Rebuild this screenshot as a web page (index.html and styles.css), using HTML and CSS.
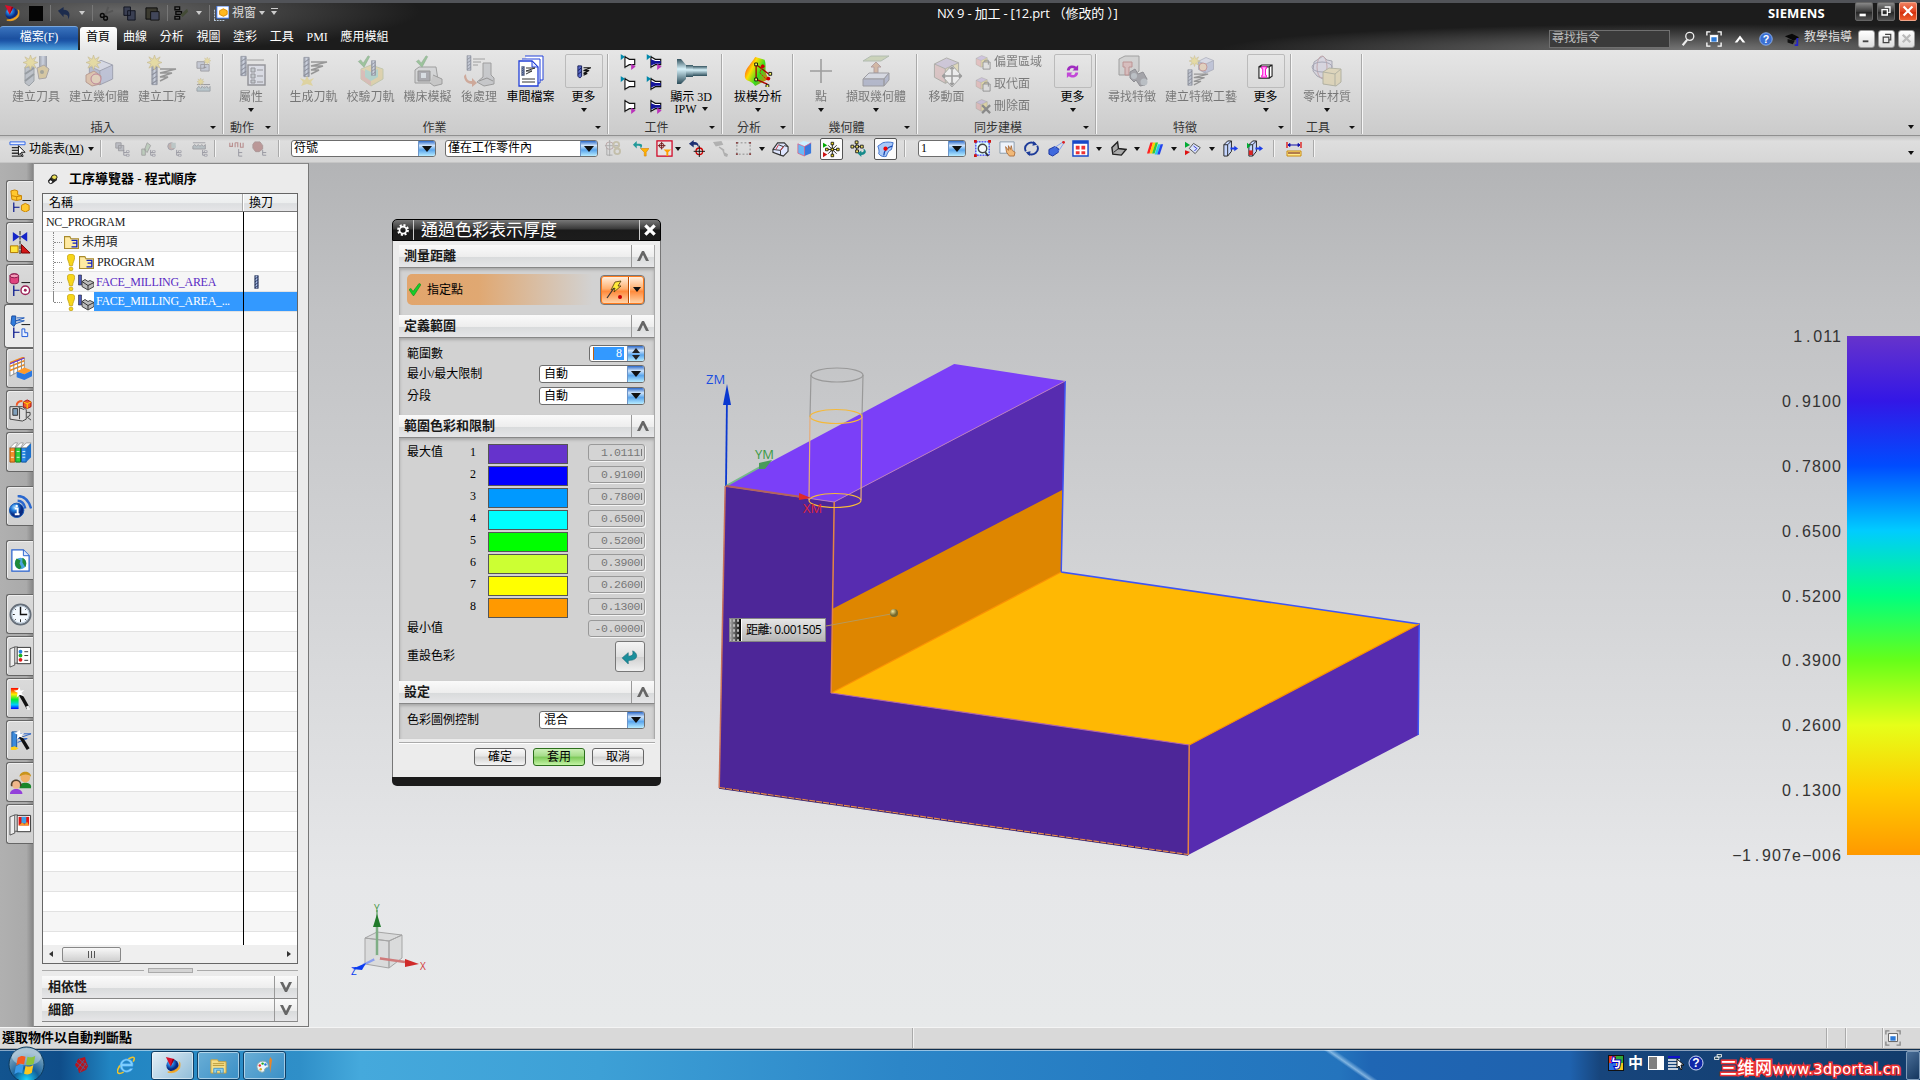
FILE: index.html
```html
<!DOCTYPE html>
<html lang="zh-Hant">
<head>
    <meta charset="UTF-8">
    <title>NX 9 - 加工</title>
    <link rel="stylesheet" href="styles.css">
</head>
<body>
    <!-- icon library -->
    <svg class="defs" width="0" height="0">
        <defs>
            <linearGradient id="steel"><stop offset="0" stop-color="#3c4a66"/><stop offset=".5" stop-color="#a9bce8"/><stop offset="1" stop-color="#2f3d63"/></linearGradient>
            <linearGradient id="pipe" x2="0" y2="1"><stop offset="0" stop-color="#33525e"/><stop offset=".4" stop-color="#d8f2fa"/><stop offset="1" stop-color="#2b4c59"/></linearGradient>
            <linearGradient id="heat" x1="0" x2="1" y1=".2" y2=".8"><stop offset="0" stop-color="#f22"/><stop offset=".3" stop-color="#fd0"/><stop offset=".6" stop-color="#3d2"/><stop offset="1" stop-color="#f60"/></linearGradient>
            <linearGradient id="rain" x2="0" y2="1"><stop offset="0" stop-color="#f00"/><stop offset=".3" stop-color="#fe0"/><stop offset=".55" stop-color="#0e3"/><stop offset=".8" stop-color="#0cf"/><stop offset="1" stop-color="#00f"/></linearGradient>
            <radialGradient id="ball" cx=".35" cy=".3"><stop offset="0" stop-color="#9fd8ff"/><stop offset=".5" stop-color="#1e78d8"/><stop offset="1" stop-color="#0a2a80"/></radialGradient>
            <radialGradient id="orb" cx=".5" cy=".95" r=".8"><stop offset="0" stop-color="#19d8ff"/><stop offset=".45" stop-color="#12609c"/><stop offset="1" stop-color="#7fa6bf"/></radialGradient>
            <radialGradient id="bead" cx=".35" cy=".3"><stop offset="0" stop-color="#f0e6a0"/><stop offset="1" stop-color="#75682a"/></radialGradient>
        </defs>
        <symbol id="star" viewBox="0 0 16 16"><path d="M8 0l1.600 4.600L14 2l-2.400 4.500L16 8l-4.500 1.600L14 14l-4.600-2.500L8 16l-1.500-4.500L2 14l2.400-4.500L0 8l4.600-1.600L2 2l4.500 2.500z" fill="#f5d21c" stroke="#a98300" stroke-width=".7"/></symbol>
        <symbol id="mill" viewBox="0 0 8 24"><path d="M1 1h6v22H1z" fill="url(#steel)" stroke="#26345c"/><path d="M1 7l6-4M1 12l6-4M1 17l6-4M1 22l6-4" stroke="#1b2750" stroke-width="1.300"/></symbol>
        <symbol id="lines" viewBox="0 0 18 14"><path d="M1 1h16L1 5h12L1 9h8L1 13" fill="none" stroke="#333" stroke-width="1.400"/></symbol>
        <symbol id="cube" viewBox="0 0 24 24"><path d="M2 7l9 4v12l-9-5z" fill="#7789c9"/><path d="M2 7l10-5 10 4-11 5z" fill="#c4cdf2"/><path d="M11 11l11-5v12l-11 5z" fill="#8c9cdb"/><path d="M2 7l10-5 10 4v12l-11 5-9-5zm0 0l9 4 11-5M11 11v12" fill="none" stroke="#3c4777" stroke-width=".8"/></symbol>
        <symbol id="goldcube" viewBox="0 0 24 24"><path d="M2 7l9 4v12l-9-5z" fill="#e39a9a"/><path d="M2 7l10-5 10 4-11 5z" fill="#b6a0d8"/><path d="M11 11l11-5v12l-11 5z" fill="#e5cf6c"/><path d="M2 7l10-5 10 4v12l-11 5-9-5zm0 0l9 4 11-5M11 11v12" fill="none" stroke="#665" stroke-width=".8"/></symbol>
        <symbol id="check" viewBox="0 0 16 16"><path d="M1 8l3-2 3 4 6-9 2 1-7 13z" fill="#20a51f" stroke="#0b6a18" stroke-width=".7"/></symbol>
        <symbol id="tool-new" viewBox="0 0 32 32"><path d="M19 1h8v15h-8z" fill="url(#steel)"/><path d="M17 13l7-3 5 4-3 9-7 1z" fill="#d7a72c" stroke="#655"/><circle cx="22" cy="17" r="2" fill="#553"/><path d="M5 12h9v14l-5 5-4-3z" fill="#8d9db5" stroke="#456"/><path d="M5 19l9-6M5 26l9-7" stroke="#345" stroke-width="2"/><use href="#star" x="3" y="0" width="15" height="15"/></symbol>
        <symbol id="geo-new" viewBox="0 0 32 32"><use href="#cube" x="4" y="2" width="28" height="30"/><path d="M3 20l8-4 7 5-1 8-8 2-6-4z" fill="#ee9a55" stroke="#9a3c1c"/><circle cx="13" cy="24" r="5" fill="#f3bb77" stroke="#b04"/><use href="#star" x="3" y="0" width="15" height="15"/></symbol>
        <symbol id="op-new" viewBox="0 0 32 32"><use href="#mill" x="5" y="9" width="7" height="22"/><use href="#lines" x="13" y="13" width="18" height="14"/><use href="#star" x="1" y="0" width="15" height="15"/></symbol>
        <symbol id="prop" viewBox="0 0 32 32"><use href="#mill" x="5" y="0" width="7" height="22"/><path d="M12 5h17" stroke="#444"/><path d="M13 10h17v20H13z" fill="#cfd6f2" stroke="#334" stroke-width="1.500"/><path d="M16 13h4v4h-4zm0 6h4v4h-4zm0 6h4v3h-4z" fill="#9ab" stroke="#334"/><path d="M22 15h6m-6 6h6m-6 6h6" stroke="#334"/></symbol>
        <symbol id="op-gen" viewBox="0 0 32 32"><use href="#mill" x="5" y="1" width="7" height="22"/><use href="#lines" x="12" y="5" width="18" height="16"/><path d="M9 21l2 4 5-2-3 4 2 4-6-2-6 2 2-4-3-4 5 2z" fill="#edc81e"/></symbol>
        <symbol id="verify" viewBox="0 0 32 32"><path d="M6 14l10-4 12 4v10l-12 7-10-7z" fill="#e8c04a" stroke="#9a5"/><path d="M6 14l10 6v11l-10-7z" fill="#e88b7b"/><path d="M10 14l6 3 7-3v8l-7 4-6-4z" fill="#62c9b4"/><use href="#mill" x="15" y="5" width="7" height="16"/><use href="#check" x="2" y="0" width="14" height="13"/></symbol>
        <symbol id="machine" viewBox="0 0 32 32"><path d="M3 15l4-3h17l2 13-5 3H3z" fill="#c4c8cc" stroke="#444"/><path d="M6 16h12v10H6z" fill="#667" stroke="#333"/><path d="M9 18h5v5H9z" fill="#cde"/><path d="M21 20l9 4v5l-8 2-4-3" fill="#aaa" stroke="#444"/><use href="#check" x="3" y="0" width="14" height="13"/></symbol>
        <symbol id="post" viewBox="0 0 32 32"><use href="#mill" x="3" y="0" width="6" height="16"/><path d="M10 4h12M10 7h8M10 10h5" stroke="#444"/><path d="M3 19c0 7 4 7 6 7v-3l5 5-5 4v-3c-4 0-8-3-8-8z" fill="#d95d2b"/><path d="M20 8h8v12l3 3v6l-10 2-7-4 6-5z" fill="#a7abb4" stroke="#444"/><path d="M16 26l8-3 6 3" fill="none" stroke="#333"/></symbol>
        <symbol id="docs" viewBox="0 0 32 32"><path d="M10 1h18v24h-3M7 4h18v24h-3" fill="#fff" stroke="#2340d8"/><path d="M4 6h13l6 6v19H4z" fill="#fff" stroke="#2340d8" stroke-width="1.300"/><path d="M17 6v6h6z" fill="#dce5ff" stroke="#2340d8"/><use href="#mill" x="6" y="11" width="4" height="10"/><path d="M11 13h9l-9 3h6l-6 3M7 24h13M7 27h13" fill="none" stroke="#333"/></symbol>
        <symbol id="op" viewBox="0 0 16 16"><path d="M2 2h4v11l-2 2-2-2z" fill="#5a69c8" stroke="#111a55"/><path d="M2 7l4-3M2 11l4-3" stroke="#111a55"/><path d="M8 4h8L8 7h6l-6 3h4l-4 2" fill="none" stroke="#111" stroke-width="1.200"/></symbol>
        <symbol id="cone-w" viewBox="0 0 18 18"><path d="M5 2v14M5 3l5 3h6v6h-6l-5 3z" fill="#fff" stroke="#111" stroke-width="1.300"/></symbol>
        <symbol id="cone-b" viewBox="0 0 18 18"><path d="M5 2v14M5 3l5 3h6v6h-6l-5 3z" fill="#fff" stroke="#111" stroke-width="1.300"/><path d="M5 6l5 2h6v3h-6l-5 2z" fill="#15159a"/></symbol>
        <symbol id="arr-in" viewBox="0 0 18 18"><path d="M0 0l5 3-5 4z" fill="#08a"/></symbol>
        <symbol id="arr-out" viewBox="0 0 18 18"><path d="M12 11l5 3-5 4z" fill="#b3b"/></symbol>
        <symbol id="ipw" viewBox="0 0 32 32"><path d="M2 4h4l5 6v14l-5 5H2z" fill="url(#pipe)"/><path d="M11 10h7v12h-7z" fill="url(#pipe)"/><path d="M18 11h14v10H18z" fill="url(#pipe)"/></symbol>
        <symbol id="draft" viewBox="0 0 34 34"><path d="M14 2l10 3c3 8-2 13 5 20L14 33C10 26 4 29 3 23 3 14 8 12 14 2z" fill="url(#heat)"/><path d="M15 10v16m0-16l13 10m-13 6l12 5" stroke="#a00" fill="none" stroke-width="1.400"/><path d="M22 10l-3 9 8 8" stroke="#d11" stroke-dasharray="2 1" fill="none"/><circle cx="22" cy="12" r="2" fill="#c00"/><circle cx="28" cy="25" r="2" fill="#c00"/><path d="M13.500 8.500h3v3h-3zm0 16h3v3h-3zm15-6h3v3h-3zm-3 13h3v3h-3z" fill="#ff6" stroke="#111"/></symbol>
        <symbol id="point" viewBox="0 0 32 32"><path d="M16 4v24M5 16h22" stroke="#444" stroke-width="1.600"/></symbol>
        <symbol id="extract" viewBox="0 0 32 32"><path d="M3 6l8-5h18l-8 5z" fill="#a6c069" stroke="#686"/><path d="M14 18v-6h-3l5-5 5 5h-3v6z" fill="#d47b3a" stroke="#844"/><path d="M3 24l6-6h20l-5 6z" fill="#c9d2ee" stroke="#445"/><path d="M3 24h21v7H3zM24 24l5-6v7l-5 6z" fill="#7686c4" stroke="#445"/></symbol>
        <symbol id="moveface" viewBox="0 0 32 32"><use href="#goldcube" x="1" y="0" width="29" height="30"/><path d="M21 10l10 11-10 11-10-11z" fill="#fff" stroke="#555"/><path d="M21 12v18M12 21h18M19 14l2-2 2 2m-4 14l2 2 2-2M14 19l-2 2 2 2m14-4l2 2-2 2" stroke="#444" stroke-width="1.500" fill="none"/></symbol>
        <symbol id="sync" viewBox="0 0 16 16"><path d="M2 7c0-5 6-7 10-4l2-2v6H8l2-2C7 3 5 5 5 7z" fill="#a02cc0"/><path d="M14 9c0 5-6 7-10 4l-2 2V9h6l-2 2c3 2 5 0 5-2z" fill="#c248d8"/></symbol>
        <symbol id="findfeat" viewBox="0 0 32 32"><path d="M3 4l6-3h14v15l-5 4H3z" fill="#bbb" stroke="#444"/><path d="M7 7h9v5h-3v8H9v-8H7z" fill="#d88" stroke="#a22"/><path d="M14 17l5-3 3 5 5-2 4 7-2 6-5 1-4-6-2 2-4-4z" fill="#556" stroke="#223"/><circle cx="28" cy="27" r="3.500" fill="#89a"/><circle cx="18" cy="21" r="3" fill="#89a"/></symbol>
        <symbol id="featop" viewBox="0 0 32 32"><use href="#cube" x="12" y="1" width="18" height="18"/><circle cx="18" cy="12" r="4" fill="#efb77a" stroke="#b33"/><use href="#star" x="4" y="0" width="11" height="12"/><use href="#mill" x="2" y="14" width="6" height="17"/><use href="#lines" x="8" y="18" width="16" height="13"/></symbol>
        <symbol id="slot" viewBox="0 0 16 16"><path d="M1 3l3-2h11v12l-3 2H1zM1 3h11v12M12 3l3-2" fill="#fff" stroke="#222" stroke-width="1.200"/><path d="M4 3h5v2H8v7h1v2H4v-2h1V5H4z" fill="#fbf" stroke="#f0c"/></symbol>
        <symbol id="material" viewBox="0 0 32 32"><path d="M12 1l4 4 5 1v11l-4 3-5 4-6-3-4-5 1-9 6-4z" fill="#c9c4e5" stroke="#557"/><ellipse cx="11" cy="12" rx="5" ry="11" fill="none" stroke="#a56"/><ellipse cx="11" cy="12" rx="10" ry="5" fill="none" stroke="#558"/><path d="M12 17l6-4 12 1v13l-5 4-13-2z" fill="#e3c772" stroke="#774"/><path d="M12 17l12 2 6-5M24 19v12" stroke="#774" fill="none"/></symbol>
        <symbol id="mini-a" viewBox="0 0 16 16"><path d="M1 5h8v7H1zM5 8h9v7H5z" fill="#99a6cc" stroke="#445"/><path d="M8 11h3" stroke="#223"/><use href="#star" x="8" y="0" width="8" height="8"/></symbol>
        <symbol id="mini-b" viewBox="0 0 16 16"><path d="M1 7h14M3 10v-1m3 1V9m3 1V9m3 1V9" stroke="#334"/><path d="M1 11l2-2 2 2 2-2 2 2 2-2 2 2 2-2v5H1z" fill="#7faec0" stroke="#456"/><use href="#star" x="1" y="0" width="8" height="8"/></symbol>
        <symbol id="face-s" viewBox="0 0 18 18"><use href="#goldcube" width="15" height="16"/><path d="M9 9h8v8H9z" fill="#ddd" stroke="#333"/><path d="M11 9V7h4v5" stroke="#333" fill="none"/></symbol>
        <symbol id="face-x" viewBox="0 0 18 18"><use href="#goldcube" width="15" height="16"/><path d="M8 8l9 9m0-9l-9 9" stroke="#333" stroke-width="2.500"/></symbol>
        <!-- toolbar icons, 18px grid -->
        <symbol id="t-menu" viewBox="0 0 18 18"><path d="M1 2h16v3H1z" fill="#e8efff" stroke="#2b63e8"/><path d="M3 8h9m-9 3h9m-9 3h9m-9 3h10" stroke="#333" stroke-width="1.400"/><path d="M10 6v10l2-2 2 4 1-1-2-4h4z" fill="#fff" stroke="#111"/></symbol>
        <symbol id="t-tree" viewBox="0 0 18 18"><path d="M2 2h6v6H2zM5 5h6v6H5z" fill="#8c93a8" stroke="#445"/><path d="M11 10v6h5m-5-3h5" stroke="#335" fill="none"/><path d="M14 11h3v2h-3zm0 4h3v2h-3z" fill="#fff" stroke="#335" stroke-width=".8"/></symbol>
        <symbol id="t-tree2" viewBox="0 0 18 18"><path d="M2 9h4v7H2zM8 2l4 3-4 8-3-3z" fill="#8b8" stroke="#555"/><path d="M12 10v6h4m-4-3h4" stroke="#335" fill="none"/><path d="M14 11h3v2h-3zm0 4h3v2h-3z" fill="#fff" stroke="#335" stroke-width=".8"/></symbol>
        <symbol id="t-ball" viewBox="0 0 18 18"><circle cx="6" cy="6" r="4" fill="#a8766a" stroke="#557"/><path d="M6 2h5v6H6z" fill="#8aa"/><path d="M12 10v6h4m-4-3h4" stroke="#335" fill="none"/><path d="M14 11h3v2h-3zm0 4h3v2h-3z" fill="#fff" stroke="#335" stroke-width=".8"/></symbol>
        <symbol id="t-wave" viewBox="0 0 18 18"><path d="M1 2h14M1 6l2-2 2 2 2-2 2 2 2-2 2 2 2-2v5H1z" fill="#7f9aa8" stroke="#445"/><path d="M12 10v6h4m-4-3h4" stroke="#335" fill="none"/><path d="M14 11h3v2h-3zm0 4h3v2h-3z" fill="#fff" stroke="#335" stroke-width=".8"/></symbol>
        <symbol id="t-snap" viewBox="0 0 18 18"><circle cx="6" cy="6" r="4" fill="none" stroke="#955"/><path d="M6 0v17M1 6h16M3 8v8h6" stroke="#666" fill="none"/><circle cx="13" cy="5" r="3" fill="none" stroke="#a95" stroke-width="2"/><circle cx="14" cy="12" r="3" fill="none" stroke="#a95" stroke-width="2"/></symbol>
        <symbol id="t-filter" viewBox="0 0 18 18"><path d="M9 9h9l-3 4v4h-2v-4z" fill="#ffb400" stroke="#d87c00" stroke-width=".6"/><path d="M1 5l4-4v3h3c4 0 3 4 1 5 0-2 0-3-2-3H5v3z" fill="#239a9a"/></symbol>
        <symbol id="t-funbox" viewBox="0 0 18 18"><path d="M1 1h16v16H1z" fill="#e5e5e5" stroke="#d00020" stroke-width="1.300"/><circle cx="6" cy="6" r="2.500" fill="none" stroke="#822"/><path d="M6 2v8M2 6h8" stroke="#611"/><path d="M8 10h8l-3 3v4h-2v-4z" fill="#ffa000"/></symbol>
        <symbol id="t-undo" viewBox="0 0 18 18"><path d="M1 4l5-4v2c4 0 6 2 5 6-1-3-2-3-5-3v3z" fill="#1c2f72"/><circle cx="12" cy="12" r="3.500" fill="none" stroke="#c00" stroke-width="1.400"/><path d="M12 6v12M6 12h12" stroke="#111"/></symbol>
        <symbol id="t-brush" viewBox="0 0 18 18"><path d="M1 2l9-1 2 4-8 2zM8 7l5 3v3l4 2-1 3-3-1-2-6-4-3z" fill="#777"/></symbol>
        <symbol id="t-marq" viewBox="0 0 18 18"><path d="M2 3h14v12H2z" fill="none" stroke="#888" stroke-dasharray="2 2"/><path d="M1 2h2v2H1zm14 0h2v2h-2zM1 14h2v2H1zm14 0h2v2h-2z" fill="#844"/></symbol>
        <symbol id="t-wire" viewBox="0 0 18 18"><path d="M1 10l5-7h7l4 4v5l-5 5-3-1-8-3z" fill="#dfe6ff" stroke="#333" stroke-width="1.200"/><path d="M9 16v-5l4-5 4 1M1 10l8 1M7 5l5 2" stroke="#333" fill="none"/><path d="M7 5l-3 5M12 7l-3 4" stroke="#c33" fill="none"/></symbol>
        <symbol id="t-solid" viewBox="0 0 18 18"><path d="M2 4l7 3v10l-7-3z" fill="#68b8f6"/><path d="M2 4l6-3 8 2-7 4z" fill="#cdf0ff"/><path d="M9 7l7-4v11l-7 3z" fill="#3978dd"/><path d="M9 7v10M2 4l7 3 7-4M2 4v10l7 3" fill="none" stroke="#e25a80" stroke-width=".8"/></symbol>
        <symbol id="t-pts" viewBox="0 0 20 20"><path d="M0 2l5 3-5 3z" fill="#0a0"/><path d="M0 13l5 3-5 3z" fill="#c11"/><path d="M11 3v14M5 10h12M6 5l10 10M16 5L6 15" stroke="#111"/><path d="M9.500 1.500h3v3h-3zm0 14h3v3h-3zM3 8.500h3v3H3zm13 0h3v3h-3zm-6.500 0h3v3h-3z" fill="#f8df1b" stroke="#111"/></symbol>
        <symbol id="t-pts2" viewBox="0 0 18 18"><path d="M7 1v12M1 7h12" stroke="#333"/><path d="M5.500 1h3v3h-3zM1 5.500h3v3H1zm5 0h3v3H6zm5 0h3v3h-3zm-5 5h3v3H6z" fill="#f0e060" stroke="#222"/><path d="M8 14l4-3v2c3 0 3-2 2-4 4 2 4 6-2 7v2z" fill="#178b8b"/></symbol>
        <symbol id="t-curv" viewBox="0 0 20 20"><path d="M1 6l6-4c4-1 8-1 12 0l-2 8c-3 1-5 4-6 8-3 1-7 0-9-3 1-3 0-6-1-9z" fill="#a9c9fa" stroke="#2b62c5"/><path d="M8 17c0-6 5-10 10-11" fill="none" stroke="#1445b0" stroke-width="1.400"/><circle cx="10" cy="9" r="2.500" fill="#e00"/></symbol>
        <symbol id="t-fit" viewBox="0 0 18 18"><path d="M2 2h14v14H2z" fill="#dff" stroke="#00f" stroke-dasharray="2 1"/><circle cx="9" cy="9" r="4.500" fill="#f3f7fa" stroke="#444" stroke-width="1.500"/><path d="M12 13l3 4" stroke="#333" stroke-width="2"/><path d="M0 0h3v3H0zm15 0h3v3h-3zM0 15h3v3H0z" fill="#c11"/></symbol>
        <symbol id="t-pan" viewBox="0 0 18 18"><path d="M1 2h15v12H1z" fill="#eef3fb" stroke="#89a"/><path d="M7 7l3 4 0-5 2 4 1-4 1 5 3 2-1 4h-5l-3-4z" fill="#f0b878" stroke="#a45f2b" stroke-width=".8"/></symbol>
        <symbol id="t-rot" viewBox="0 0 18 18"><path d="M3 12C0 6 7 0 13 4M15 6c3 6-4 12-10 8" fill="none" stroke="#1e3c99" stroke-width="2"/><path d="M11 1l4 4-5 1zM7 17l-4-4 5-1z" fill="#1e3c99"/></symbol>
        <symbol id="t-persp" viewBox="0 0 18 18"><path d="M1 10l6-3 4 2v4l-6 4-4-2z" fill="#3f69dd" stroke="#1c36a0"/><path d="M7 8l9-6m-5 10l6-9" stroke="#7b9cf0"/><circle cx="16.500" cy="2.500" r="1.500" fill="#d22"/></symbol>
        <symbol id="t-win" viewBox="0 0 18 18"><path d="M1 1h16v16H1z" fill="#fff" stroke="#1848c8" stroke-width="1.500"/><path d="M1 1h16v3H1z" fill="#1848c8"/><path d="M4 6h4v4H4zm6 0h4v4h-4zm-6 6h4v3H4zm6 0h4v3h-4z" fill="#e33"/></symbol>
        <symbol id="t-clip" viewBox="0 0 18 18"><path d="M2 8l6-6 1 7 8 1-5 6-9-1z" fill="#aaa" stroke="#222" stroke-width="1.500"/><path d="M4 13l5-4" stroke="#222"/></symbol>
        <symbol id="t-rain" viewBox="0 0 20 18"><path d="M4 2h3L3 15H0z" fill="#f22"/><path d="M7 2h3L6 15H3z" fill="#fc0"/><path d="M10 2h3L9 15H6z" fill="#3c3"/><path d="M13 4h3l-4 12H9z" fill="#2ce"/><path d="M16 4h3l-4 12h-3z" fill="#24e"/></symbol>
        <symbol id="t-wcs" viewBox="0 0 20 18"><path d="M0 1l6 4-6 3z" fill="#0a3"/><path d="M0 11l6 2-6 4z" fill="#d11"/><path d="M5 9l5-6 8 5-6 7z" fill="#dbe4fa" stroke="#444"/><path d="M10 6l4 3-3 3" stroke="#22c" fill="none"/></symbol>
        <symbol id="t-exit" viewBox="0 0 18 18"><path d="M2 5l4-4h4v11l-4 5H2zM2 5h4v12M6 5l4-4" fill="#c5d6ff" stroke="#222"/><path d="M9 8h4V6l4 3-4 3v-2H9z" fill="#1b3de8"/></symbol>
        <symbol id="t-meas" viewBox="0 0 18 18"><path d="M2 1v6m14-6v6" stroke="#d11" stroke-width="1.300"/><path d="M3 4h12M3 4l2-1.500v3zm12 0l-2-1.500v3z" fill="#11a" stroke="#11a"/><path d="M2 10h14v5H2z" fill="#ffe98a" stroke="#c98a10"/><path d="M4 11v2m2-2v2m2-2v2m2-2v2m2-2v2m2-2v2" stroke="#611"/></symbol>
        <symbol id="nx" viewBox="0 0 18 18"><circle cx="9" cy="9" r="6.500" fill="url(#ball)"/><path d="M16 5c2 4-2 10-12 11 5 2 13-1 13-7 0-2 0-3-1-4z" fill="#f6a821" stroke="#f6a821" stroke-width=".8"/><path d="M2 0l9 2-4 8z" fill="#d80f2c"/><path d="M11 2L7 10l2-8z" fill="#8c0018"/></symbol>
        <symbol id="full" viewBox="0 0 18 18"><path d="M1 5V1h4M13 1h4v4M17 13v4h-4M5 17H1v-4" fill="none" stroke="currentColor" stroke-width="1.500"/><path d="M4 4h10v9H4z" fill="#fff" stroke="#555"/><path d="M6 7h6v5H6z" fill="#2c7ad8"/></symbol>
        <!-- resource bar icons, 24px grid -->
        <symbol id="r-asm" viewBox="0 0 24 24"><path d="M2 2l4-1 3 1v4l4 1v4l-5 1-5-1z" fill="#ffc82e" stroke="#c98300"/><path d="M3 7l5 1v4m0-4l5-1" stroke="#c98300" fill="none"/><path d="M5 14v11m0-6h6" stroke="#00108a" stroke-width="1.200"/><path d="M13 17l4-2 4 2v5l-4 2-4-2z" fill="#ffc82e" stroke="#c98300"/><path d="M14 12h9" stroke="#111"/></symbol>
        <symbol id="r-cons" viewBox="0 0 24 24"><path d="M4 1l7 5-7 5zM19 1l-7 5 7 5z" fill="#1526c8"/><path d="M11.500 0v24" stroke="#111" stroke-dasharray="4 1"/><path d="M1.500 15.500h8v7h-8z" fill="#ffe53d" stroke="#b07600"/><path d="M13 14l9 9h-9z" fill="#d31616" stroke="#700"/></symbol>
        <symbol id="r-part" viewBox="0 0 24 24"><path d="M1 3c0-3 9-3 9 0v6c0 3-9 3-9 0z" fill="#e0437e" stroke="#8a184b"/><ellipse cx="5.500" cy="3" rx="4.500" ry="2" fill="#f49ab8" stroke="#8a184b"/><path d="M13 10h9" stroke="#111"/><path d="M5 13v11m0-6h6" stroke="#00108a" stroke-width="1.300"/><circle cx="17" cy="18" r="4.500" fill="#fff" stroke="#9b2458" stroke-width="1.500"/><circle cx="17" cy="18" r="1.500" fill="#9b2458"/></symbol>
        <symbol id="r-op" viewBox="0 0 24 24"><path d="M3 1h4v8l-2 3-3-3z" fill="#2f7bdc" stroke="#1a4a9c"/><path d="M8 3h8L7 6h9l-9 3" stroke="#1c58b8" fill="none"/><path d="M13 10h9" stroke="#111"/><path d="M5 13v11m0-6h6" stroke="#00108a" stroke-width="1.300"/><path d="M13.500 14.500h3v4h3v4h-6z" fill="#e8f0ff" stroke="#1c58d8"/></symbol>
        <symbol id="r-feat" viewBox="0 0 24 24"><path d="M1 7l15-6v11L1 20z" fill="#fff" stroke="#777" stroke-width=".8"/><path d="M1 6l15-6M1 10l15-6M1 14l15-6" stroke="#f08a1c" stroke-width="1.600"/><path d="M5 5v13m4-14v13m4-15v13" stroke="#888"/><path d="M1 7l15-6" stroke="#6a31d8" stroke-width="1.200"/><path d="M8 15l8-4 8 3-8 4z" fill="#ff9a2a"/><path d="M8 15l8 3v6l-8-3zM16 18l8-4v6l-8 4z" fill="#2b79e2"/></symbol>
        <symbol id="r-mach" viewBox="0 0 24 24"><path d="M1 8h13l4 3v10l-4 2-13-2z" fill="#ddd" stroke="#444"/><path d="M4 10h5v7H4z" fill="#7fa0bc" stroke="#333"/><path d="M11 9v12m-1-12l6 2m2 3h4v3l-3 2 4 3" stroke="#444" fill="none"/><path d="M15 3l4-2 4 2v5l-4 2-4-2z" fill="#f05a28" stroke="#aa0f0f"/><path d="M15 3l4 2 4-2m-4 2v5" stroke="#fd0" fill="none"/><path d="M14 2C9 2 8 5 8 7" stroke="#f05a28" stroke-width="2" fill="none"/></symbol>
        <symbol id="r-lib" viewBox="0 0 24 24"><path d="M1 7h5v15H1z" fill="#f2902a" stroke="#a9520a"/><path d="M7 7h5v15H7z" fill="#2dd13c" stroke="#107a1b"/><path d="M13 7h5v15h-5z" fill="#2c8ee8" stroke="#10509a"/><path d="M18 7l5-5v15l-5 5z" fill="#1c70cc"/><path d="M1 7l5-5h3L6 7zM7 7l5-5h3l-3 5zM13 7l5-5h5l-5 5z" fill="#fff" stroke="#777" stroke-width=".6"/><path d="M2 11h3m-3 6h3m3-6h3m-3 6h3m3-6h3m-3 3h3m-3 3h3" stroke="#fff" stroke-width=".8"/></symbol>
        <symbol id="r-info" viewBox="0 0 24 24"><circle cx="8" cy="16" r="7.500" fill="url(#ball)" stroke="#1559b8"/><path d="M6 14h3v6m-3 0h5" stroke="#fff" stroke-width="2" fill="none"/><circle cx="8" cy="11.500" r="1.300" fill="#fff"/><path d="M9 6c4 0 7 3 8 8M9 1c8 0 12 6 14 13" fill="none" stroke="#2a68cf" stroke-width="2.500"/></symbol>
        <symbol id="r-web" viewBox="0 0 24 24"><path d="M3 1h12l6 6v16H3z" fill="#fff" stroke="#2a63d0" stroke-width="1.300"/><path d="M15 1v6h6" fill="#dce8ff" stroke="#2a63d0"/><circle cx="12" cy="15" r="6" fill="#4aa3de"/><path d="M8 10l4 2-1 3 2 4-2 2c-5-1-6-7-3-11zM14 9c4 2 5 6 3 10l-3-5z" fill="#1f8a37"/></symbol>
        <symbol id="r-clock" viewBox="0 0 24 24"><circle cx="12" cy="12" r="10.500" fill="#f3f9ff" stroke="#666f7a" stroke-width="2"/><circle cx="12" cy="12" r="9" fill="none" stroke="#b4c4d4"/><path d="M12 4v8h7" stroke="#111" stroke-width="1.500" fill="none"/><path d="M12 17v3M4 12h2m1-5l-1-1m11 1l1-1M7 17l-1 1m11-1l1 1" stroke="#222"/></symbol>
        <symbol id="r-list" viewBox="0 0 24 24"><path d="M1 4l5-2v19l-5 2zM6 2h3v17H6" fill="#eee" stroke="#555"/><path d="M8.500 2.500h14v17h-14z" fill="#fff" stroke="#333"/><circle cx="12" cy="7" r="2" fill="#2482e0"/><circle cx="12" cy="11" r="2" fill="#1db01d"/><circle cx="12" cy="15.500" r="2" fill="#e01c1c"/><path d="M16 7h4m-4 4h4m-4 5h4" stroke="#333"/></symbol>
        <symbol id="r-heat" viewBox="0 0 24 24"><path d="M2 1h8v22H2z" fill="url(#rain)"/><path d="M12 8l8 14" stroke="#111" stroke-width="3.500"/><path d="M19 20l2 4" stroke="#eee" stroke-width="3"/><path d="M11 0l1 4 4-1-3 3 3 4-5-2-3 3 1-5-4-2 4-1z" fill="#fff"/></symbol>
        <symbol id="r-wand" viewBox="0 0 24 24"><path d="M3 3h5v16H3z" fill="#3c8bdc" stroke="#1c569c"/><path d="M8 5h15l-14 5h10l-10 4" stroke="#2a62c4" fill="none"/><path d="M2 19l4-1 4 2-3 2H2z" fill="#ffd21e"/><path d="M12 8l8 13" stroke="#111" stroke-width="3.500"/><path d="M11 1l1 4 4-1-3 3 3 3-5-2-3 3 1-5-4-2 4-1z" fill="#fff"/></symbol>
        <symbol id="r-role" viewBox="0 0 24 24"><path d="M11 16c0-5 12-5 12 0v2H11z" fill="#18862a"/><circle cx="17" cy="7" r="5" fill="#f0b26a"/><path d="M11 6c0-7 12-7 12 0-3-3-8-3-12 0z" fill="#c9941c"/><path d="M1 24c0-7 13-7 13 0z" fill="#9340da"/><path d="M2 16c-2-9 12-10 11 0z" fill="#54432f"/><circle cx="7.500" cy="14.500" r="4" fill="#f0b78a"/></symbol>
        <symbol id="r-pic" viewBox="0 0 24 24"><path d="M1 4l5-2v19l-5 2zM6 2h3v17H6" fill="#eee" stroke="#555"/><path d="M8.500 2.500h14v17h-14z" fill="#fff" stroke="#333"/><path d="M10 4h11v9H10z" fill="#e01515"/><path d="M13 4h5v7h-5z" fill="#3da0e8"/><path d="M10 13l4-3 2 2 3-3 2 4z" fill="#f59a26"/></symbol>
        <!-- tree icons -->
        <symbol id="folder" viewBox="0 0 14 13"><path d="M.5 1.500h5l1 2h7v9H.5z" fill="#ffeaa2" stroke="#a88a2c"/><path d="M7 5h5v2.500H8M12 7.500V11H7" stroke="#1020c0" stroke-width="1.200" fill="none"/></symbol>
        <symbol id="bang" viewBox="0 0 7 16"><path d="M0 3c0-4 7-4 7 0 0 3-2 5-2 8H2C2 8 0 6 0 3z" fill="#f7d51b" stroke="#b79400" stroke-width=".6"/><circle cx="3.500" cy="14" r="1.800" fill="#f7d51b" stroke="#b79400" stroke-width=".6"/></symbol>
        <symbol id="facemill" viewBox="0 0 16 16"><path d="M4 7l3-2 3 2 2-1 4 2v4l-6 3.500L4 12z" fill="#bbb" stroke="#333" stroke-width=".9"/><path d="M4 7l6 4 6-3M10 11v4" stroke="#333" fill="none"/><path d="M.5.500h3v10h-3z" fill="#4b59b8" stroke="#223" stroke-width=".6"/></symbol>
    </svg>

    <header class="titlebar">
        <div class="title-row">
            <div class="quick-access">
                <svg class="q-nx"><use href="#nx"/></svg>
                <span class="q-save"></span>
                <i class="q-sep"></i>
                <svg class="q-icon" viewBox="0 0 16 16"><path d="M1 5l6-4v3c6 0 8 5 5 10 0-4-1-5-5-5v3z" fill="#1d2c4d"/></svg>
                <i class="caret light"></i>
                <i class="q-sep"></i>
                <svg class="q-icon" viewBox="0 0 16 16"><path d="M10 1L7 9M15 5L5 9" stroke="#555" stroke-width="2"/><circle cx="3.500" cy="10" r="2" fill="none" stroke="#090909" stroke-width="1.500"/><circle cx="7" cy="13" r="2" fill="none" stroke="#090909" stroke-width="1.500"/></svg>
                <svg class="q-icon wide" viewBox="0 0 16 16"><path d="M2 1h7v9H2zM6 5h8v10H6z" fill="#3a3f52" stroke="#10131f"/></svg>
                <svg class="q-icon wide" viewBox="0 0 16 16"><path d="M1 2h12v12H1z" fill="#3b3a30" stroke="#0b0b0b"/><path d="M6 6h9v9H6z" fill="#42475a" stroke="#111"/></svg>
                <i class="q-sep"></i>
                <svg class="q-icon" viewBox="0 0 16 16"><path d="M1 1h5v3H1zm1 5h6v3H2zm-1 5h5v3H1z" fill="none" stroke="#080808" stroke-width="1.400"/><path d="M7 9l7-6 1 3-6 6z" fill="#444b37"/></svg>
                <i class="caret light"></i>
                <i class="q-sep"></i>
                <svg class="q-icon q-win" viewBox="0 0 16 16"><path d="M3 0h13v13H3z" fill="#fff" stroke="#2e6be4"/><path d="M6 5l4-2 4 2v4l-4 2-4-2z" fill="#ffb81f" stroke="#d98a00"/><path d="M0 4v12h12" stroke="#bcd" stroke-dasharray="2 1" fill="none" stroke-width="2"/></svg>
                <span class="q-text">視窗</span>
                <i class="caret light"></i>
                <i class="caret light over"></i>
            </div>
            <div class="title-text">NX 9 - 加工 - [12.prt （修改的 ）]</div>
            <div class="brand">SIEMENS</div>
            <div class="win-buttons">
                <span class="wb"><svg viewBox="0 0 18 18"><path d="M4 12h7v3H4z" fill="#fff"/></svg></span>
                <span class="wb"><svg viewBox="0 0 18 18"><path d="M7.500 4.500h6v6h-2m-7-3h6v6h-6z" fill="none" stroke="#fff" stroke-width="1.500"/></svg></span>
                <span class="wb close"><svg viewBox="0 0 18 18"><path d="M4 4l10 10M14 4L4 14" stroke="#fff" stroke-width="2.500"/></svg></span>
            </div>
        </div>
        <div class="tab-row">
            <span class="file-tab">檔案(F)</span>
            <span class="tab active">首頁</span>
            <span class="tab">曲線</span>
            <span class="tab">分析</span>
            <span class="tab">視圖</span>
            <span class="tab">塗彩</span>
            <span class="tab">工具</span>
            <span class="tab">PMI</span>
            <span class="tab">應用模組</span>
            <div class="tab-right">
                <span class="search">尋找指令</span>
                <svg class="tr-icon" viewBox="0 0 18 18"><circle cx="11" cy="6" r="4.500" fill="none" stroke="#eee" stroke-width="1.500"/><path d="M8 10l-5 6" stroke="#eee" stroke-width="2.500"/></svg>
                <svg class="tr-icon white"><use href="#full"/></svg>
                <svg class="tr-icon" viewBox="0 0 18 18"><path d="M3 13l6-8 6 8h-3l-3-4-3 4z" fill="#fff"/></svg>
                <svg class="tr-icon" viewBox="0 0 18 18"><circle cx="9" cy="9" r="7" fill="#3a6fd4" stroke="#8fb4f4"/><text x="9" y="13" text-anchor="middle" class="q-mark">?</text></svg>
                <svg class="tr-icon" viewBox="0 0 18 18"><path d="M1 6l8-3 8 4-6 4z" fill="#080808"/><path d="M4 9v4l6 2 2-4" fill="#111"/><path d="M15 8v8h-3" stroke="#22c" stroke-width="2" fill="none"/></svg>
                <span class="teach">教學指導</span>
                <span class="mdi"><svg viewBox="0 0 16 16"><path d="M4 10h6v2H4z" fill="#444"/></svg></span>
                <span class="mdi"><svg viewBox="0 0 16 16"><path d="M6.500 3.500h6v6h-2m-6-3h6v6h-6z" fill="none" stroke="#444" stroke-width="1.300"/></svg></span>
                <span class="mdi"><svg viewBox="0 0 16 16"><path d="M4 4l8 8M12 4l-8 8" stroke="#bbb" stroke-width="2.500"/></svg></span>
            </div>
        </div>
    </header>

    <div class="ribbon">
        <section class="group g-insert">
            <div class="group-body">
                <div class="btn off w62"><svg><use href="#tool-new"/></svg><span>建立刀具</span></div>
                <div class="btn off w64"><svg><use href="#geo-new"/></svg><span>建立幾何體</span></div>
                <div class="btn off w62"><svg><use href="#op-new"/></svg><span>建立工序</span></div>
                <div class="minis off"><svg><use href="#mini-a"/></svg><svg><use href="#mini-b"/></svg></div>
            </div>
            <div class="group-foot"><span>插入</span><i class="caret"></i></div>
        </section>
        <section class="group g-action">
            <div class="group-body">
                <div class="btn off"><svg><use href="#prop"/></svg><span>屬性</span><i class="caret"></i></div>
            </div>
            <div class="group-foot"><span>動作</span><i class="caret"></i></div>
        </section>
        <section class="group g-job">
            <div class="group-body">
                <div class="btn off w57"><svg><use href="#op-gen"/></svg><span>生成刀軌</span></div>
                <div class="btn off w57"><svg><use href="#verify"/></svg><span>校驗刀軌</span></div>
                <div class="btn off w57"><svg><use href="#machine"/></svg><span>機床模擬</span></div>
                <div class="btn off w46"><svg><use href="#post"/></svg><span>後處理</span></div>
                <div class="btn w57"><svg><use href="#docs"/></svg><span>車間檔案</span></div>
                <div class="btn more"><div class="more-box"><svg><use href="#op"/></svg></div><span>更多</span><i class="caret"></i></div>
            </div>
            <div class="group-foot"><span>作業</span><i class="caret"></i></div>
        </section>
        <section class="group g-work">
            <div class="group-body">
                <div class="cones">
                    <svg viewBox="0 0 18 18"><use href="#cone-w"/><use href="#arr-in"/><use href="#arr-out"/></svg>
                    <svg viewBox="0 0 18 18"><use href="#cone-b"/><use href="#arr-in"/><use href="#arr-out"/></svg>
                    <svg viewBox="0 0 18 18"><use href="#cone-w"/><use href="#arr-in"/></svg>
                    <svg viewBox="0 0 18 18"><use href="#cone-b"/><use href="#arr-in"/></svg>
                    <svg viewBox="0 0 18 18"><use href="#cone-w"/><use href="#arr-out"/></svg>
                    <svg viewBox="0 0 18 18"><use href="#cone-b"/><use href="#arr-out"/></svg>
                </div>
                <div class="btn w46"><svg><use href="#ipw"/></svg><span>顯示 3D</span><span class="line2">IPW <i class="caret"></i></span></div>
            </div>
            <div class="group-foot"><span>工件</span><i class="caret"></i></div>
        </section>
        <section class="group g-tools">
            <div class="group-body">
                <div class="btn"><svg><use href="#draft"/></svg><span>拔模分析</span><i class="caret"></i></div>
            </div>
            <div class="group-foot"><span>分析</span><i class="caret"></i></div>
        </section>
        <section class="group g-geom">
            <div class="group-body">
                <div class="btn off w50"><svg><use href="#point"/></svg><span>點</span><i class="caret"></i></div>
                <div class="btn off w60"><svg><use href="#extract"/></svg><span>擷取幾何體</span><i class="caret"></i></div>
            </div>
            <div class="group-foot"><span>幾何體</span><i class="caret"></i></div>
        </section>
        <section class="group g-sync">
            <div class="group-body">
                <div class="btn off w57"><svg><use href="#moveface"/></svg><span>移動面</span></div>
                <ul class="face-list off">
                    <li><svg><use href="#face-s"/></svg>偏置區域</li>
                    <li><svg><use href="#face-s"/></svg>取代面</li>
                    <li><svg><use href="#face-x"/></svg>刪除面</li>
                </ul>
                <div class="btn more"><div class="more-box"><svg><use href="#sync"/></svg></div><span>更多</span><i class="caret"></i></div>
            </div>
            <div class="group-foot"><span>同步建模</span><i class="caret"></i></div>
        </section>
        <section class="group g-feat">
            <div class="group-body">
                <div class="btn off w60"><svg><use href="#findfeat"/></svg><span>尋找特徵</span></div>
                <div class="btn off w78"><svg><use href="#featop"/></svg><span>建立特徵工藝</span></div>
                <div class="btn more"><div class="more-box"><svg><use href="#slot"/></svg></div><span>更多</span><i class="caret"></i></div>
            </div>
            <div class="group-foot"><span>特徵</span><i class="caret"></i></div>
        </section>
        <section class="group g-tools">
            <div class="group-body">
                <div class="btn off"><svg><use href="#material"/></svg><span>零件材質</span><i class="caret"></i></div>
            </div>
            <div class="group-foot"><span>工具</span><i class="caret"></i></div>
        </section>
        <i class="caret ribbon-end"></i>
    </div>

    <div class="toolbar">
        <div class="menu-btn"><svg><use href="#t-menu"/></svg><span>功能表(<u>M</u>)</span><i class="caret"></i></div>
        <i class="sep"></i>
        <div class="tools t1 off">
            <svg><use href="#t-tree"/></svg><svg><use href="#t-tree2"/></svg><svg><use href="#t-ball"/></svg><svg><use href="#t-wave"/></svg>
        </div>
        <i class="sep"></i>
        <div class="tools t2 off">
            <svg viewBox="0 0 18 18"><path d="M2 2v4h3V2m3 0v5m0-5h3v5m3-5v5h3V2" stroke="#a22" fill="none" stroke-width="1.300"/><path d="M12 9v8h4m-4-4h4" stroke="#335" fill="none"/></svg>
            <svg viewBox="0 0 18 18"><path d="M3 1h6l3 4v4l-4 3H4L1 8V4z" fill="#a33" stroke="#733"/><path d="M12 10v6h4m-4-3h4" stroke="#335" fill="none"/></svg>
        </div>
        <i class="sep"></i>
        <div class="combo c-sym"><span>符號</span><b></b></div>
        <div class="combo c-scope"><span>僅在工作零件內</span><b></b></div>
        <div class="tools t3">
            <svg class="dim"><use href="#t-snap"/></svg>
            <svg class="push"><use href="#t-filter"/></svg>
            <span class="unit"><svg><use href="#t-funbox"/></svg><i class="caret"></i></span>
            <svg><use href="#t-undo"/></svg>
            <svg class="dim"><use href="#t-brush"/></svg>
            <span class="unit wide"><svg><use href="#t-marq"/></svg><i class="caret"></i></span>
            <svg><use href="#t-wire"/></svg>
            <svg><use href="#t-solid"/></svg>
            <span class="pressed"><svg><use href="#t-pts"/></svg></span>
            <svg><use href="#t-pts2"/></svg>
            <span class="pressed"><svg><use href="#t-curv"/></svg></span>
        </div>
        <i class="sep"></i>
        <div class="combo c-layer"><span>1</span><b></b></div>
        <div class="tools t4">
            <svg><use href="#t-fit"/></svg>
            <svg><use href="#t-pan"/></svg>
            <svg><use href="#t-rot"/></svg>
            <svg><use href="#t-persp"/></svg>
            <span class="unit wide"><svg><use href="#t-win"/></svg><i class="caret"></i></span>
            <span class="unit wide"><svg><use href="#t-clip"/></svg><i class="caret"></i></span>
            <span class="unit wide"><svg><use href="#t-rain"/></svg><i class="caret"></i></span>
            <span class="unit wide"><svg><use href="#t-wcs"/></svg><i class="caret"></i></span>
            <svg><use href="#t-exit"/></svg>
            <svg viewBox="0 0 18 18"><use href="#t-exit"/><path d="M0 3l4 3-4 3z" fill="#0a3"/><path d="M2 11h4v5H2z" fill="#d22"/></svg>
        </div>
        <i class="sep"></i>
        <svg class="meas"><use href="#t-meas"/></svg>
        <i class="sep"></i>
        <i class="caret toolbar-end"></i>
    </div>

    <main class="workspace">
        <nav class="resource-bar">
            <span class="res"><svg><use href="#r-asm"/></svg></span>
            <span class="res"><svg><use href="#r-cons"/></svg></span>
            <span class="res"><svg><use href="#r-part"/></svg></span>
            <span class="res active"><svg><use href="#r-op"/></svg></span>
            <span class="res"><svg><use href="#r-feat"/></svg></span>
            <span class="res"><svg><use href="#r-mach"/></svg></span>
            <span class="res"><svg><use href="#r-lib"/></svg></span>
            <span class="res spaced"><svg><use href="#r-info"/></svg></span>
            <span class="res spaced"><svg><use href="#r-web"/></svg></span>
            <span class="res spaced"><svg><use href="#r-clock"/></svg></span>
            <span class="res"><svg><use href="#r-list"/></svg></span>
            <span class="res"><svg><use href="#r-heat"/></svg></span>
            <span class="res"><svg><use href="#r-wand"/></svg></span>
            <span class="res"><svg><use href="#r-role"/></svg></span>
            <span class="res"><svg><use href="#r-pic"/></svg></span>
        </nav>

        <aside class="navigator">
            <h2><svg viewBox="0 0 12 12"><path d="M1 8l5-6 4 1 1 4-5 4-4-1z" fill="#222"/><ellipse cx="8" cy="4" rx="3" ry="2.500" fill="#eee35a" stroke="#111"/><circle cx="4" cy="9" r="2" fill="#fff" stroke="#111"/></svg>工序導覽器 - 程式順序</h2>
            <div class="tree">
                <div class="tree-head"><span class="col-name">名稱</span><span class="col-tool">換刀</span></div>
                <div class="tree-body">
                    <div class="col names">
                        <div class="row root">NC_PROGRAM</div>
                        <div class="row branch"><i class="twig"></i><svg class="fold lone"><use href="#folder"/></svg>未用項</div>
                        <div class="row branch"><i class="twig"></i><svg class="bang"><use href="#bang"/></svg><svg class="fold"><use href="#folder"/></svg>PROGRAM</div>
                        <div class="row branch"><i class="twig"></i><svg class="bang"><use href="#bang"/></svg><svg class="fm"><use href="#facemill"/></svg><span class="violet">FACE_MILLING_AREA</span></div>
                        <div class="row branch last"><i class="twig"></i><svg class="bang"><use href="#bang"/></svg><svg class="fm"><use href="#facemill"/></svg><span class="picked">FACE_MILLING_AREA_...</span></div>
                    </div>
                    <div class="col changes">
                        <div class="row"></div>
                        <div class="row"></div>
                        <div class="row"></div>
                        <div class="row"><svg class="chg"><use href="#mill"/></svg></div>
                        <div class="row picked"></div>
                    </div>
                </div>
                <div class="hscroll"><i class="sc-left"></i><span class="thumb"></span><i class="sc-right"></i></div>
            </div>
            <div class="splitter"><i></i><b></b><i></i></div>
            <div class="fold-head"><span>相依性</span><svg viewBox="0 0 12 10"><path d="M0 0h3l3 6 3-6h3L7 10H5z"/></svg></div>
            <div class="fold-head"><span>細節</span><svg viewBox="0 0 12 10"><path d="M0 0h3l3 6 3-6h3L7 10H5z"/></svg></div>
        </aside>

        <div class="viewport">
            <svg class="scene" viewBox="309 163 1611 864">
                <g transform="translate(-.8 0)">
                    <!-- part faces -->
                    <path d="M726 486L955 364l111 17-231 121z" fill="#7b3ff8"/>
                    <path d="M835 502l231-121-4 191-230 121z" fill="#572cb0"/>
                    <path d="M833 609l230-119-1 82-230 121z" fill="#de8600"/>
                    <path d="M1062 572l358 52-230 121-358-52z" fill="#ffb803"/>
                    <path d="M726 486l109 16-3 191 358 52-1 110-469-67z" fill="#4d2698"/>
                    <path d="M1190 745l230-121-1 111-230 120z" fill="#572cb0"/>
                    <!-- edges -->
                    <path d="M1066 381l-4 191 358 52-1 111" fill="none" stroke="#3f55f5" stroke-width="1.500"/>
                    <path d="M726 486l-6 302" stroke="#c9715c" stroke-width="1.500"/>
                    <path d="M726 486l109 16 231-121" fill="none" stroke="#bb7cc4"/>
                    <path d="M835 502l-3 191M1190 745l-1 110" stroke="#e58442" stroke-width="1.500"/>
                    <path d="M832 693l230-121M1190 745l230-121" stroke="#fb9300" stroke-width="1.200"/>
                    <path d="M832 693l358 52" stroke="#b466a5" stroke-width="1.200"/>
                    <path d="M720 788l469 67" stroke="#28146a" stroke-width="1.600"/>
                    <path d="M720 787.500l469 67" stroke="#e88a4a" stroke-width="1.200" stroke-dasharray="6 1"/>
                </g>
                <!-- cutter -->
                <g fill="none" stroke="#999" stroke-width="1.200"><ellipse cx="837" cy="375" rx="26" ry="7"/><path d="M811 375l-1 42m53-42l-1 42"/></g>
                <g fill="none" stroke="#f4b93a" stroke-width="1.200"><ellipse cx="836" cy="416.500" rx="26" ry="7"/><ellipse cx="835" cy="500.500" rx="26" ry="7"/></g>
                <path d="M810 417l-1 83m53-83l-1 83" stroke="#e6ad7a" stroke-width="1.200"/>
                <!-- machine axes -->
                <path d="M726 486l1-90" stroke="#0a38d0" stroke-width="1.800"/><path d="M727 384l4 21h-8z" fill="#0a38d0"/>
                <path d="M726 486l34-19" stroke="#76b98a" stroke-width="2"/><path d="M759 463l13-3-7 9-6 0z" fill="#4a9a5a"/>
                <path d="M726 486l76 11" stroke="#b4645c" stroke-width="2"/><path d="M799 493l12 5-12 2z" fill="#dd2a2a"/>
                <g class="axis-text"><text x="706" y="384" fill="#1a4de0">ZM</text><text x="755" y="459" fill="#3b9a45">YM</text><text x="803" y="513" fill="#dd2438">XM</text></g>
                <!-- measured point -->
                <path d="M826 626l65-12" stroke="#b7995a"/><circle cx="894" cy="613" r="4" fill="url(#bead)"/>
                <!-- view triad -->
                <g stroke="#a5a5a5" fill="#cfcfcf" fill-opacity=".55"><path d="M365 938l12-6 25 3-13 6zM365 938l24 3v27l-24-4zM389 941l13-6v23l-13 10z"/></g>
                <path d="M377 958v-34" stroke="#7fae85" stroke-width="2.500"/><path d="M377 910v16" stroke="#3a8a3e"/><path d="M377 914l4 13h-8z" fill="#217a2a"/>
                <path d="M377 958l28 4" stroke="#cf7a7a" stroke-width="2.500"/><path d="M405 959l14 5-14 3z" fill="#d02a2a"/>
                <path d="M377 958l-14 7" stroke="#8b9ff0" stroke-width="2.500"/><path d="M366 963l-4 7-10-1z" fill="#0a3cf0"/>
                <circle cx="377" cy="958" r="3" fill="#ddd"/>
                <g class="triad-text"><text x="374" y="912" fill="#479a4a">Y</text><text x="420" y="970" fill="#d23a3a">X</text><text x="351" y="975" fill="#0a3cf0">Z</text></g>
            </svg>

            <div class="measure-tip"><i></i><span>距離: 0.001505</span></div>

            <div class="legend">
                <ul>
                    <li>1<i>.</i>011</li>
                    <li>0<i>.</i>9100</li>
                    <li>0<i>.</i>7800</li>
                    <li>0<i>.</i>6500</li>
                    <li>0<i>.</i>5200</li>
                    <li>0<i>.</i>3900</li>
                    <li>0<i>.</i>2600</li>
                    <li>0<i>.</i>1300</li>
                    <li><i>−</i>1<i>.</i>907e<i>−</i>006</li>
                </ul>
                <div class="ramp"></div>
            </div>

            <div class="dialog">
                <div class="dlg-title">
                    <svg viewBox="0 0 16 16"><circle cx="8" cy="8" r="5.500" fill="none" stroke="#fff" stroke-width="2.500" stroke-dasharray="2.300 2"/><circle cx="8" cy="8" r="4" fill="none" stroke="#fff" stroke-width="2"/></svg>
                    <span>通過色彩表示厚度</span>
                    <svg class="x" viewBox="0 0 12 12"><path d="M2 2l8 8M10 2l-8 8" stroke="#fff" stroke-width="2.800"/></svg>
                </div>
                <div class="dlg-main">
                    <div class="sec-head"><span>測量距離</span><svg viewBox="0 0 12 10"><path d="M0 10h3l3-6 3 6h3L7 0H5z"/></svg></div>
                    <div class="sec sec-point">
                        <div class="point-row">
                            <svg class="ok" viewBox="0 0 12 12"><path d="M0 6l2-1 2 3 6-8 2 1-7 11H4z" fill="#16cf2a" stroke="#0a8a18" stroke-width=".6"/></svg>
                            <span>指定點</span>
                            <div class="infer"><svg viewBox="0 0 20 20"><path d="M10 2l6-1-3 5 3 0-7 6 1-4-4 2z" fill="#ffe93b" stroke="#3a2a00" stroke-width=".7"/><path d="M9 8l-7 10" stroke="#333" stroke-width="1.200"/><circle cx="15" cy="17" r="2" fill="#c00"/></svg><i class="caret big"></i></div>
                        </div>
                    </div>
                    <div class="sec-head"><span>定義範圍</span><svg viewBox="0 0 12 10"><path d="M0 10h3l3-6 3 6h3L7 0H5z"/></svg></div>
                    <div class="sec sec-range">
                        <div class="field"><label>範圍數</label><div class="spin"><span>8</span><b></b></div></div>
                        <div class="field"><label>最小/最大限制</label><div class="pick"><span>自動</span><b></b></div></div>
                        <div class="field"><label>分段</label><div class="pick"><span>自動</span><b></b></div></div>
                    </div>
                    <div class="sec-head"><span>範圍色彩和限制</span><svg viewBox="0 0 12 10"><path d="M0 10h3l3-6 3 6h3L7 0H5z"/></svg></div>
                    <div class="sec sec-colors">
                        <div class="range"><label>最大值</label><em>1</em><span class="swatch s1"></span><span class="val">1.0111</span></div>
                        <div class="range"><label></label><em>2</em><span class="swatch s2"></span><span class="val">0.9100</span></div>
                        <div class="range"><label></label><em>3</em><span class="swatch s3"></span><span class="val">0.7800</span></div>
                        <div class="range"><label></label><em>4</em><span class="swatch s4"></span><span class="val">0.6500</span></div>
                        <div class="range"><label></label><em>5</em><span class="swatch s5"></span><span class="val">0.5200</span></div>
                        <div class="range"><label></label><em>6</em><span class="swatch s6"></span><span class="val">0.3900</span></div>
                        <div class="range"><label></label><em>7</em><span class="swatch s7"></span><span class="val">0.2600</span></div>
                        <div class="range"><label></label><em>8</em><span class="swatch s8"></span><span class="val">0.1300</span></div>
                        <div class="range"><label>最小值</label><span class="val">-0.0000</span></div>
                        <div class="reset"><label>重設色彩</label><span class="reset-btn"><svg viewBox="0 0 18 16"><path d="M0 9l7-6v4c5 0 6-2 5-6 6 2 8 11-5 11v4z" fill="#1b8f9c" stroke="#0d6272" stroke-width=".6"/></svg></span></div>
                    </div>
                    <div class="sec-head"><span>設定</span><svg viewBox="0 0 12 10"><path d="M0 10h3l3-6 3 6h3L7 0H5z"/></svg></div>
                    <div class="sec sec-set">
                        <div class="field"><label>色彩圖例控制</label><div class="pick"><span>混合</span><b></b></div></div>
                    </div>
                    <div class="dlg-buttons"><span>確定</span><span class="apply">套用</span><span>取消</span></div>
                </div>
                <div class="dlg-bottom"></div>
            </div>
        </div>
    </main>

    <div class="statusbar">
        <span class="prompt">選取物件以自動判斷點</span>
        <span class="cell c1"></span>
        <span class="cell c2"></span>
        <span class="cell c3"></span>
        <span class="cell c4"><svg><use href="#full"/></svg></span>
    </div>

    <footer class="taskbar">
        <svg class="start" viewBox="0 0 38 38"><circle cx="19" cy="19" r="18" fill="url(#orb)" stroke="#0c3a5c"/><ellipse cx="19" cy="11" rx="15" ry="9" fill="#fff" opacity=".35"/><path d="M10 12c3-2 5-2 8-1l-1.500 8c-3-1-5-1-8 1z" fill="#f25a22"/><path d="M20 11c3 1 5 1 8-1l-1.500 8c-3 2-5 2-8 1z" fill="#8cc43c"/><path d="M8 21c3-2 5-2 8-1l-1.500 8c-3-1-5-1-8 1z" fill="#3a9ae8"/><path d="M18 20.500c3 1 5 1 8-1l-1.500 8c-3 2-5 2-8 1z" fill="#fcc81e"/></svg>
        <svg class="tb-icon red" viewBox="0 0 16 16"><path d="M5 2l7-2 1 4 2 5-2 4-7 3-1-4-3-4 2-4z" fill="#b8141e"/><path d="M3 5l9 7M6 2l8 7M4 12l7-9M7 15l6-9" stroke="#3a6ea8" stroke-width=".8"/></svg>
        <svg class="tb-icon ie" viewBox="0 0 20 20"><path d="M15 11H6c0 5 6 5 8 2h3c-3 7-14 5-14-3S15 0 17 8c0 1 0 2-.2 3zM6 8h8c-1-4-7-4-8 0z" fill="#7fd0ff" stroke="#2f8ede" stroke-width=".6"/><path d="M17 6c3-5 0-6-5-3M3 10c-5 8-2 10 4 7" fill="none" stroke="#f0c42c" stroke-width="1.600"/></svg>
        <span class="task on"><svg><use href="#nx"/></svg></span>
        <span class="task"><svg viewBox="0 0 18 18"><path d="M1 3h7l1 2h8v12H1z" fill="#f5dd86" stroke="#caa23c"/><path d="M3 7h12M3 9h12" stroke="#b89a3c"/><path d="M4 17v-5h10v5h-3v-3H7v3z" fill="#8fd0f0" stroke="#4898c4"/></svg></span>
        <span class="task"><svg viewBox="0 0 18 18"><path d="M1 10c0-7 12-8 12 0-1 2-4 1-4 4 0 4-8 2-8-4z" fill="#eef6fb" stroke="#8aa"/><circle cx="4" cy="9" r="1.300" fill="#e33"/><circle cx="7" cy="7" r="1.300" fill="#2a2"/><circle cx="10" cy="8" r="1.300" fill="#27d"/><circle cx="5" cy="13" r="1.300" fill="#da2"/><path d="M15 0l2 3-2 14-1-13z" fill="#e8862a"/></svg></span>
        <div class="tray">
            <span class="ime">ㄅ</span>
            <span class="zh">中</span>
            <svg viewBox="0 0 16 16"><path d="M0 1h16v14H0z" fill="#fff"/><path d="M1 2h8v12H1z" fill="#808080"/></svg>
            <svg viewBox="0 0 16 16"><path d="M0 2h12M0 5h12M0 8h10M0 11h10M0 14h10" stroke="#fff" stroke-width="1.600"/><path d="M0 2h12" stroke="#11c" stroke-width="2"/><path d="M9 4v9l2-2 2 4 1-1-1-4h3z" fill="#fff" stroke="#111"/></svg>
            <svg viewBox="0 0 16 16"><circle cx="8" cy="8" r="7" fill="#1026a8" stroke="#cdd8f5"/><text x="8" y="12" text-anchor="middle" class="q-mark">?</text></svg>
            <svg class="restore" viewBox="0 0 9 7"><path d="M3.500.500h5v3h-5zM.500 3.500h5v3h-5z" fill="#245" stroke="#fff"/></svg>
        </div>
        <span class="show-desktop"></span>
        <span class="site-mark"><b>三维网</b>www.3dportal.cn</span>
    </footer>
</body>
</html>
```

FILE: styles.css
```css
* {
    box-sizing: border-box;
}
body {
    margin: 0;
    width: 1920px;
    height: 1080px;
    overflow: hidden;
    display: flex;
    flex-direction: column;
    font-family: "Liberation Serif", "Noto Sans CJK TC", sans-serif;
    font-size: 12px;
    line-height: 14px;
    color: #000;
    background: #d9d9d9;
}
svg {
    display: block;
    flex: none;
}
ul {
    list-style: none;
    margin: 0;
    padding: 0;
}
.defs {
    position: absolute;
}
.caret {
    display: inline-block;
    flex: none;
    width: 0;
    height: 0;
    border: 3px solid transparent;
    border-top: 4px solid #111;
    border-bottom: 0;
}
.caret.light {
    border-top-color: #ccc;
}
.off > svg,
.dim {
    opacity: 0.42;
    filter: saturate(0.7);
}
.off > span,
.off > li {
    opacity: 0.45;
}

/* title bar */
.titlebar {
    height: 50px;
    border-top: 3px solid #515358;
    background: radial-gradient(ellipse 480px 26px at 1700px 47px, #777 0, transparent 100%),
                radial-gradient(ellipse 300px 40px at 120px 8px, #666 0, transparent 100%), #1c1c1c;
    color: #fff;
}
.title-row {
    display: flex;
    height: 23px;
}
.quick-access {
    display: flex;
    align-items: center;
    width: 937px;
    padding: 0 0 3px 3px;
}
.q-nx {
    width: 17px;
    height: 17px;
    margin-right: 9px;
}
.q-save {
    width: 14px;
    height: 15px;
    background: #050505;
    margin-right: 7px;
}
.q-sep {
    width: 1px;
    height: 16px;
    background: #777;
    margin: 0 6px 0 7px;
}
.q-save + .q-sep {
    margin-left: 0;
}
.q-icon {
    width: 15px;
    height: 15px;
}
.q-icon + .caret {
    margin-left: 7px;
}
.q-icon.wide {
    margin-left: 8px;
}
.q-icon.q-win {
    margin-left: -2px;
}
.q-text {
    margin: 0 3px;
    color: #ddd;
}
.caret.over {
    position: relative;
    margin-left: 6px;
}
.caret.over::before {
    content: "";
    position: absolute;
    left: -3px;
    top: -7px;
    width: 7px;
    height: 1px;
    background: #ccc;
}
.title-text {
    width: 831px;
    font: 13px/20px "Open Sans", "Noto Sans CJK TC", sans-serif;
    letter-spacing: -0.2px;
    white-space: pre;
}
.brand {
    width: 87px;
    font: bold 13px/21px "Open Sans", sans-serif;
    letter-spacing: 0.1px;
}
.win-buttons {
    display: flex;
    gap: 4px;
    margin-top: -1px;
}
.wb {
    width: 18px;
    height: 19px;
    border: 1px solid #666;
    border-radius: 2px;
    background: linear-gradient(#888, #3a3a3a 50%, #222 51%, #555);
}
.wb.close {
    border-color: #f0a58a;
    background: linear-gradient(#f08060, #e0401c 50%, #d02c08 51%, #f06030);
}
.tab-row {
    display: flex;
    height: 24px;
    align-items: stretch;
    line-height: 23px;
}
.file-tab {
    width: 78px;
    margin-right: 2px;
    text-align: center;
    line-height: 21px;
    border-radius: 3px 3px 0 0;
    border-top: 1px solid #78a6dc;
    background: linear-gradient(#3973bd, #1c51a0 50%, #1c55a8 60%, #4da0dc);
}
.tab {
    margin-right: 12.7px;
    white-space: nowrap;
}
.tab.active {
    margin: 1px 6px 0 0;
    padding: 0 6px;
    line-height: 21px;
    width: 37px;
    color: #000;
    border-radius: 3px 3px 0 0;
    background: linear-gradient(#fff, #e6e6e6);
}
.tab-right {
    display: flex;
    align-items: center;
    margin-left: auto;
    padding: 1px 5px 0 0;
}
.search {
    width: 121px;
    height: 18px;
    margin-right: 10px;
    padding-left: 2px;
    line-height: 15px;
    color: #bbb;
    border: 1px solid #707070;
    background: #3b3b3b;
}
.tr-icon {
    width: 16px;
    height: 16px;
    margin-right: 10px;
    color: #fff;
}
.q-mark {
    font: bold 12px "Liberation Sans", sans-serif;
    fill: #fff;
}
.teach {
    color: #ddd;
    margin: -3px 6px 0 -6px;
}
.teach + .mdi {
    margin-left: 0;
}
.mdi {
    width: 17px;
    height: 18px;
    margin-left: 3px;
    border: 1px solid #999;
    border-radius: 3px;
    background: linear-gradient(#fff, #ddd);
}

/* ribbon */
.ribbon {
    display: flex;
    height: 86px;
    border-bottom: 1px solid #909090;
    background: linear-gradient(#e6e6e6, #cbcbcb);
}
.group {
    display: flex;
    flex-direction: column;
    height: 80px;
    margin-top: 4px;
    border-right: 1px solid #f6f6f6;
    box-shadow: inset -1px 0 0 #aaa;
}
.group-body {
    display: flex;
    height: 64px;
}
.group-foot {
    display: flex;
    align-items: center;
    height: 16px;
    padding-top: 3px;
    color: #333;
}
.group-foot span {
    flex: 1;
    text-align: center;
}
.group-foot .caret {
    border-width: 3px 3px 0;
    margin: 0 7px 0 5px;
}
.g-insert {
    width: 224px;
}
.g-insert .group-body {
    padding-left: 5px;
}
.g-action {
    width: 55px;
}
.g-job {
    width: 330px;
}
.g-job .group-body {
    padding-left: 6px;
}
.g-work {
    width: 114px;
}
.g-work .group-body {
    padding-left: 11px;
}
.g-tools {
    width: 71px;
}
.g-geom {
    width: 124px;
}
.g-geom .group-body {
    padding-left: 2px;
}
.g-sync {
    width: 179px;
}
.g-feat {
    width: 195px;
}
.g-feat .group-body {
    padding-left: 5px;
}
.btn {
    display: flex;
    flex-direction: column;
    align-items: center;
    flex: 1;
    padding-top: 1px;
    white-space: nowrap;
}
.btn > svg {
    width: 32px;
    height: 32px;
}
.btn span {
    margin-top: 2px;
    height: 16px;
    line-height: 16px;
}
.btn > .caret {
    margin-top: 3px;
}
.btn .line2 {
    display: flex;
    align-items: center;
    gap: 5px;
    margin-top: -4px;
}
.w46 { flex: 0 0 46px; }
.w50 { flex: 0 0 50px; }
.w57 { flex: 0 0 57px; }
.w60 { flex: 0 0 60px; }
.w62 { flex: 0 0 62px; }
.w64 { flex: 0 0 64px; }
.w78 { flex: 0 0 78px; }
.more {
    padding-top: 0;
}
.more-box {
    display: flex;
    align-items: center;
    justify-content: center;
    width: 38px;
    height: 34px;
    border: 1px solid #bbb;
    border-radius: 2px;
    background: linear-gradient(#e6e6e6, #dadada);
}
.more-box svg {
    width: 15px;
    height: 15px;
}
.more span {
    margin-top: 1px;
}
.minis {
    display: flex;
    flex-direction: column;
    gap: 6px;
    padding: 3px 0 0 3px;
}
.minis svg {
    width: 15px;
    height: 15px;
}
.cones {
    display: grid;
    grid-template-columns: 26px 20px;
    grid-auto-rows: 22px;
    padding-right: 2px;
}
.cones svg {
    width: 17px;
    height: 16px;
}
.face-list {
    width: 74px;
    margin-top: -3px;
}
.face-list li {
    display: flex;
    align-items: center;
    height: 22px;
    gap: 3px;
    white-space: nowrap;
}
.face-list svg {
    width: 16px;
    height: 16px;
}
.ribbon-end {
    margin: 75px 6px 0 auto;
}

/* toolbar */
.toolbar {
    display: flex;
    align-items: center;
    height: 27px;
    padding-bottom: 1px;
    background: linear-gradient(#c3c3c3, #dedede 20%, #d6d6d6);
    border-bottom: 1px solid #c6c6c6;
}
.menu-btn {
    display: flex;
    align-items: center;
    width: 100px;
    padding-left: 9px;
}
.menu-btn svg {
    width: 17px;
    height: 17px;
    margin-right: 3px;
}
.menu-btn .caret {
    margin-left: 4px;
}
.sep {
    flex: none;
    width: 2px;
    height: 17px;
    border-left: 1px solid #aaa;
    border-right: 1px solid #f4f4f4;
}
.tools {
    display: flex;
    align-items: center;
    justify-content: space-between;
}
.tools svg {
    width: 17px;
    height: 17px;
}
.t1 {
    width: 112px;
    padding: 0 6px 0 12px;
}
.t1 svg,
.t2 svg {
    width: 16px;
    height: 16px;
}
.t2 {
    width: 62px;
    padding: 0 10px 0 12px;
}
.combo,
.pick,
.spin {
    display: flex;
    border: 1px solid #6d6d6d;
    border-radius: 3px;
    background: #fff;
    overflow: hidden;
}
.combo span,
.pick span {
    flex: 1;
    padding-left: 2px;
}
.combo b,
.pick b,
.spin b {
    width: 17px;
    border-left: 1px solid #6c94c8;
    background: linear-gradient(#2a68c8, #cfe4fa 30%, #5aa5ec 60%, #b8ecff);
    position: relative;
}
.combo b::after,
.pick b::after {
    content: "";
    position: absolute;
    left: 3px;
    top: 5px;
    border: 5px solid transparent;
    border-top: 6px solid #111;
    border-bottom: 0;
}
.combo {
    flex: none;
    height: 17px;
    line-height: 14px;
}
.c-sym {
    width: 145px;
    margin-left: 11px;
}
.c-scope {
    width: 153px;
    margin-left: 9px;
}
.c-layer {
    width: 48px;
    margin-left: 12px;
}
.t3 {
    width: 293px;
    margin: 0 7px 0 6px;
}
.t3 .push {
    margin-left: 4px;
}
.unit {
    display: flex;
    align-items: center;
    gap: 2px;
}
.unit.wide {
    gap: 7px;
}
.pressed {
    width: 23px;
    height: 22px;
    padding: 2px;
    border: 1px solid #555;
    border-radius: 2px;
    background: #fbfbfb;
}
.t4 {
    width: 290px;
    margin: 0 9px 0 8px;
}
.meas {
    width: 18px;
    height: 18px;
    margin: 2px 10px 0;
}
.toolbar-end {
    margin: 8px 6px 0 auto;
}

/* workspace */
.workspace {
    display: flex;
    height: 864px;
}
.resource-bar {
    width: 33px;
    padding-top: 17px;
    background: linear-gradient(90deg, #b0b0b0, #aaa 80%, #868686);
}
.res {
    display: block;
    width: 27px;
    height: 40px;
    margin: 0 0 2px 6px;
    padding: 8px 0 0 2px;
    border: 1px solid #666;
    border-right: 0;
    border-radius: 3px 0 0 3px;
    background: linear-gradient(#dadada, #d0d0d0);
    box-shadow: inset 1px 1px 0 #eee;
}
.res svg {
    width: 23px;
    height: 23px;
}
.res.active {
    width: 29px;
    height: 44px;
    margin: -2px 0 0 4px;
    padding: 10px 0 0 4px;
    background: #ebebeb;
}
.res.spaced {
    margin-top: 14px;
}
.navigator {
    display: flex;
    flex-direction: column;
    width: 276px;
    padding: 0 10px 4px 8px;
    border-left: 1px solid #999;
    border-right: 1px solid #777;
    border-top: 1px solid #888;
    border-bottom: 1px solid #777;
    background: #ebebeb;
}
.navigator h2 {
    display: flex;
    align-items: center;
    height: 30px;
    margin: 0;
    padding: 1px 0 0 5px;
    font-size: 13px;
}
.navigator h2 svg {
    width: 11px;
    height: 12px;
    margin-right: 11px;
}
.tree {
    height: 771px;
    border: 1px solid #666;
    background: #f2f2f2;
}
.tree-head {
    display: flex;
    height: 18px;
    line-height: 18px;
    border-bottom: 1px solid #777;
    background: linear-gradient(#f2f4f5, #eceeee 55%, #dcdee0 56%, #e6e6e8);
}
.col-name {
    width: 201px;
    padding-left: 6px;
    border-right: 1px solid #fff;
    box-shadow: inset -1px 0 #aaa;
}
.col-tool {
    padding-left: 5px;
}
.tree-body {
    display: flex;
    height: 733px;
}
.col {
    background: repeating-linear-gradient(#fff 0, #fff 19px, #e2e2e2 19px, #e2e2e2 20px, #f6f6f6 20px, #f6f6f6 39px, #e2e2e2 39px, #e2e2e2 40px);
}
.names {
    width: 201px;
    border-right: 1px solid #000;
    overflow: hidden;
}
.changes {
    flex: 1;
}
.row {
    display: flex;
    align-items: center;
    height: 20px;
    color: #222;
    white-space: nowrap;
    letter-spacing: -0.3px;
}
.root {
    padding-left: 3px;
}
.branch {
    margin-left: 10px;
    border-left: 1px dotted #888;
}
.branch.last {
    border-left: 0;
    padding-left: 1px;
    background: linear-gradient(90deg, #888 1px, transparent 1px) 0 0 / 1px 10px no-repeat;
}
.twig {
    width: 8px;
    border-top: 1px dotted #888;
}
.fold {
    width: 15px;
    height: 14px;
    margin: 0 3px 0 4px;
}
.fold.lone {
    margin-left: 2px;
}
.bang {
    width: 8px;
    height: 17px;
    margin-left: 5px;
}
.fm {
    width: 16px;
    height: 17px;
    margin: 0 0 0 3px;
}
.violet {
    margin-left: 2px;
    color: #5a2cc4;
}
.row .picked {
    flex: 1;
    height: 19px;
    padding-left: 2px;
    line-height: 19px;
    margin-bottom: 1px;
}
.picked {
    background: #3399ff;
    color: #fff;
}
.row.picked {
    height: 19px;
}
.chg {
    width: 7px;
    height: 14px;
    margin-left: 9px;
}
.hscroll {
    display: flex;
    align-items: center;
    height: 18px;
    padding: 0 6px 0 6px;
    background: #efefef;
}
.sc-left,
.sc-right {
    border: 3px solid transparent;
    border-left: 0;
    border-right: 4px solid #333;
}
.sc-right {
    border-right: 0;
    border-left: 4px solid #333;
    margin-left: auto;
}
.thumb {
    width: 59px;
    height: 15px;
    margin-left: 9px;
    border: 1px solid #888;
    border-radius: 2px;
    background: linear-gradient(90deg, #555 1px, transparent 1px 3px, #555 3px 4px, transparent 4px 6px, #555 6px 7px) center / 7px 7px no-repeat, linear-gradient(#f8f8f8, #cfcfcf);
}
.splitter {
    display: flex;
    align-items: center;
    gap: 4px;
    height: 12px;
}
.splitter i {
    flex: 1;
    height: 1px;
    background: #aaa;
}
.splitter b {
    width: 45px;
    height: 5px;
    border: 1px solid #aaa;
    background: #d4d4d4;
}
.fold-head,
.sec-head {
    display: flex;
    align-items: stretch;
    height: 23px;
    line-height: 21px;
    font-size: 13px;
    font-weight: bold;
    border-bottom: 1px solid #888;
    color: #1a1a1a;
    background: linear-gradient(#fafafa, #ededed 55%, #d9dbdc 56%, #e6e6e8);
}
.fold-head {
    padding-left: 6px;
    border-right: 1px solid #999;
}
.fold-head span,
.sec-head span {
    flex: 1;
    border-right: 1px solid #999;
}
.fold-head svg,
.sec-head svg {
    width: 22px;
    height: 22px;
    padding: 5px;
    fill: #666;
}

/* graphics window */
.viewport {
    position: relative;
    flex: 1;
    background: linear-gradient(#b3b4b6, #c1c2c4 17%, #e6e7e9 83%, #e7e9ea);
}
.scene {
    width: 1611px;
    height: 864px;
}
.axis-text {
    font: 13px "Open Sans", sans-serif;
}
.triad-text {
    font: 10px "Open Sans", sans-serif;
}
.measure-tip {
    position: absolute;
    left: 420px;
    top: 455px;
    display: flex;
    width: 97px;
    height: 24px;
    border: 1px solid #858585;
    background: linear-gradient(#e6e6e6, #b5b5b5);
    font: 12px/21px "Open Sans", "Noto Sans CJK TC", sans-serif;
    letter-spacing: -0.5px;
    white-space: nowrap;
}
.measure-tip i {
    width: 12px;
    margin-right: 4px;
    border-right: 1px solid #fff;
    background: radial-gradient(circle, #bbb 1px, transparent 1.5px) 2px 4px / 4px 5px, linear-gradient(90deg, #aaa, #000);
}
.legend {
    position: absolute;
    right: 0;
    top: 173px;
    display: flex;
    gap: 5px;
}
.legend ul {
    margin-top: -9px;
}
.legend li {
    height: 64.9px;
    font: 16px/20px "Liberation Sans", sans-serif;
    letter-spacing: 1.1px;
    text-align: right;
    color: #333;
}
.legend li i {
    display: inline-block;
    width: 10px;
    font-style: normal;
    text-align: center;
    letter-spacing: 0;
}
.ramp {
    width: 73px;
    height: 519px;
    background: linear-gradient(#6633cc, #3317e6 12.5%, #004cff 25%, #00ccff 37.5%, #00ff80 50%, #66ff19 62.5%, #e6ff19 75%, #ffcc00 87.5%, #ff9900);
}

/* dialog */
.dialog {
    position: absolute;
    left: 83px;
    top: 56px;
    width: 269px;
    height: 567px;
    display: flex;
    flex-direction: column;
}
.dlg-title {
    display: flex;
    align-items: center;
    height: 22px;
    color: #fff;
    font-size: 17px;
    border: 1px solid #000;
    border-radius: 5px 5px 0 0;
    background: linear-gradient(#777, #383838 45%, #1a1a1a 50%, #1c1c1c);
}
.dlg-title svg {
    width: 14px;
    height: 14px;
    margin: 0 3px;
}
.dlg-title span {
    flex: 1;
    height: 20px;
    padding: 1px 0 0 7px;
    line-height: 20px;
    border-left: 1px solid #ccc;
    border-right: 1px solid #ccc;
}
.dlg-main {
    flex: 1;
    padding: 4px 5px 0 6px;
    border: 1px solid #777;
    border-width: 0 1px;
    background: #ececec;
}
.dlg-bottom {
    height: 9px;
    border-radius: 0 0 5px 5px;
    background: #1b1b1b;
}
.sec-head {
    padding-left: 5px;
    border-right: 1px solid #aaa;
    line-height: 22px;
}
.sec {
    padding: 0 9px 0 7px;
    border: solid #aaa;
    border-width: 0 1px;
    background: #d2d2d2;
    box-shadow: inset 0 2px 3px #aaa;
}
.sec-point {
    height: 47px;
    padding-top: 6px;
}
.point-row {
    display: flex;
    align-items: center;
    height: 31px;
    border-radius: 5px;
    background: linear-gradient(90deg, #e2a56c, #e0a872 30%, #d2d2d2 78%);
}
.point-row .ok {
    width: 12px;
    height: 13px;
    margin: 0 6px 0 2px;
}
.infer {
    display: flex;
    align-items: center;
    width: 45px;
    height: 30px;
    margin-left: auto;
    border: 1px solid #777;
    border-radius: 4px;
    box-shadow: inset 0 0 0 1px #ff7a1c;
    background: linear-gradient(90deg, transparent 27px, #b84a00 27px 28px, #fff 28px 29px, transparent 29px), linear-gradient(#fff4e6, #ffb070 45%, #ff8a3c 55%, #ffd9b0);
}
.infer svg {
    width: 20px;
    height: 20px;
    margin: 0 0 0 4px;
}
.caret.big {
    border-width: 5px 4px 0;
    margin-left: 8px;
}
.sec-range {
    height: 77px;
    padding-top: 6px;
}
.field {
    display: flex;
    align-items: center;
    justify-content: space-between;
    height: 22px;
}
.sec-range .field:first-child {
    height: 19px;
}
.pick {
    width: 106px;
    height: 18px;
    line-height: 16px;
}
.pick span {
    padding-left: 4px;
}
.spin {
    width: 56px;
    height: 17px;
    padding-left: 3px;
}
.spin span {
    flex: 1;
    height: 13px;
    margin: 1px 3px 0 0;
    padding-right: 2px;
    line-height: 13px;
    text-align: right;
    color: #fff;
    border-left: 1px solid #c06010;
    background: #3399ff;
}
.spin b::before,
.spin b::after {
    content: "";
    position: absolute;
    left: 4px;
    top: 2px;
    border: 4px solid transparent;
    border-bottom: 5px solid #222;
    border-top: 0;
}
.spin b::after {
    top: 9px;
    border-top: 5px solid #222;
    border-bottom: 0;
}
.sec-colors {
    height: 243px;
    padding-top: 3px;
}
.range {
    display: flex;
    align-items: center;
    height: 22px;
}
.range label {
    width: 60px;
}
.range em {
    width: 9px;
    text-align: right;
    font-style: normal;
}
.swatch {
    width: 80px;
    height: 20px;
    margin: 3px 0 0 12px;
    border: 1px solid #555;
}
.s1 { background: #6633cc; }
.s2 { background: #0000ff; }
.s3 { background: #0099ff; }
.s4 { background: #00ffff; }
.s5 { background: #00ff00; }
.s6 { background: #ccff33; }
.s7 { background: #ffff00; }
.s8 { background: #ff9900; }
.val {
    width: 57px;
    height: 17px;
    margin-left: auto;
    padding-right: 4px;
    font: 11.5px/15px "Liberation Mono", monospace;
    letter-spacing: -0.4px;
    text-align: right;
    color: #777;
    border: 1px solid #999;
    border-radius: 3px;
    box-shadow: 1px 1px 0 #f4f4f4;
    background: linear-gradient(90deg, transparent 52px, #777 52px 53px, transparent 53px) 0 4px / 100% 7px no-repeat #d4d4d4;
}
.reset {
    display: flex;
    align-items: center;
    justify-content: space-between;
    height: 34px;
}
.reset-btn {
    width: 30px;
    height: 31px;
    padding: 8px 5px;
    border: 1px solid #777;
    border-radius: 3px;
    background: linear-gradient(#f4f4f4, #e0e0e0 50%, #cfcfcf 51%, #f0f0f0);
}
.reset-btn svg {
    width: 18px;
    height: 14px;
}
.sec-set {
    height: 35px;
    padding-top: 5px;
}
.dlg-buttons {
    display: flex;
    justify-content: flex-end;
    gap: 7px;
    margin-top: 3px;
    padding: 5px 11px 0 0;
    border-top: 1px solid #aaa;
    box-shadow: inset 0 1px 0 #fff;
}
.dlg-buttons span {
    width: 52px;
    height: 18px;
    line-height: 16px;
    text-align: center;
    border: 1px solid #666;
    border-radius: 3px;
    background: linear-gradient(#fafafa, #e6e6e6 45%, #d2d2d2 50%, #f6f6f6);
}
.dlg-buttons .apply {
    border-color: #2c6e1c;
    background: linear-gradient(#ccf0b8, #a4dc88 45%, #7cc858 50%, #c4f4a4);
}

/* status bar */
.statusbar {
    display: flex;
    align-items: center;
    height: 22px;
    border-top: 1px solid #f4f4f4;
    border-bottom: 1px solid #aaa;
    background: #d9d9d9;
}
.prompt {
    width: 912px;
    padding-left: 2px;
    font-size: 13px;
    font-weight: bold;
}
.cell {
    height: 20px;
    border-left: 1px solid #aaa;
    box-shadow: inset 1px 0 #f2f2f2;
}
.c1 { width: 914px; }
.c2 { width: 19px; }
.c3 { width: 37px; }
.c4 { padding: 2px 0 0 2px; color: #888; }
.c4 svg {
    width: 16px;
    height: 16px;
}

/* taskbar */
.taskbar {
    position: relative;
    display: flex;
    align-items: center;
    height: 31px;
    border-top: 1px solid #0f2f4f;
    box-shadow: inset 0 1px 0 rgba(255, 255, 255, 0.5);
    background: linear-gradient(35deg, transparent 46%, rgba(190, 225, 250, 0.6) 50%, transparent 56%) 1310px 0 / 80px 31px no-repeat,
                linear-gradient(90deg, #12548f 0, #0f4d89 60px, #2185c2 110px, #2f8fc8 300px, #45a9dc 360px, #3da0d6 600px, #2c86c8 900px, #257bc2 1150px, #2474bd 1340px, #1f66b4 1370px, #1f62ae 1570px, #17457c 1600px, #123c6c 1900px);
}
.start {
    width: 37px;
    height: 37px;
    margin: -2px 28px 0 8px;
}
.tb-icon.red {
    width: 16px;
    height: 16px;
    margin-right: 29px;
}
.tb-icon.ie {
    width: 19px;
    height: 19px;
    margin: 0 15px 0 -1px;
}
.task {
    display: flex;
    align-items: center;
    justify-content: center;
    width: 43px;
    height: 29px;
    margin-right: 3px;
    border: 1px solid #0f3f66;
    border-radius: 3px;
    box-shadow: inset 0 0 0 1px rgba(255, 255, 255, 0.5);
    background: linear-gradient(135deg, #6aaed6, #3a8fc6);
}
.task.on {
    background: linear-gradient(135deg, #e4eff6, #8fbcd8);
}
.task svg {
    width: 17px;
    height: 17px;
}
.tray {
    display: flex;
    align-items: center;
    gap: 4px;
    margin: -4px 0 0 auto;
}
.tray svg {
    width: 16px;
    height: 16px;
}
.zh {
    width: 16px;
    font-size: 15px;
    line-height: 20px;
    font-weight: bold;
    color: #fff;
}
.tray .restore {
    width: 8px;
    height: 6px;
    margin: -12px 0 0 6px;
}
.ime {
    width: 16px;
    height: 16px;
    border: 1px solid #111;
    background: conic-gradient(#2fa83a 25%, #f5c81c 0 50%, #2a72e0 0 75%, #e63b1c 0);
    font: bold 12px/14px "Noto Sans CJK TC", sans-serif;
    text-align: center;
    color: #fff;
    -webkit-text-stroke: 2px #00c;
    paint-order: stroke fill;
}
.show-desktop {
    width: 14px;
    height: 29px;
    margin-left: 184px;
    border: 1px solid #7f9cba;
    border-radius: 2px;
    background: linear-gradient(135deg, #4a6f98, #14365e);
}
.site-mark {
    position: absolute;
    right: 19px;
    top: 8px;
    font: 14.500px/18px "DejaVu Sans", sans-serif;
    letter-spacing: 0.45px;
    color: #fff;
    -webkit-text-stroke: 3px #ee3030;
    paint-order: stroke fill;
}
.site-mark b {
    font: 500 17px/18px "Noto Sans CJK SC", sans-serif;
    letter-spacing: 0.5px;
}
```
